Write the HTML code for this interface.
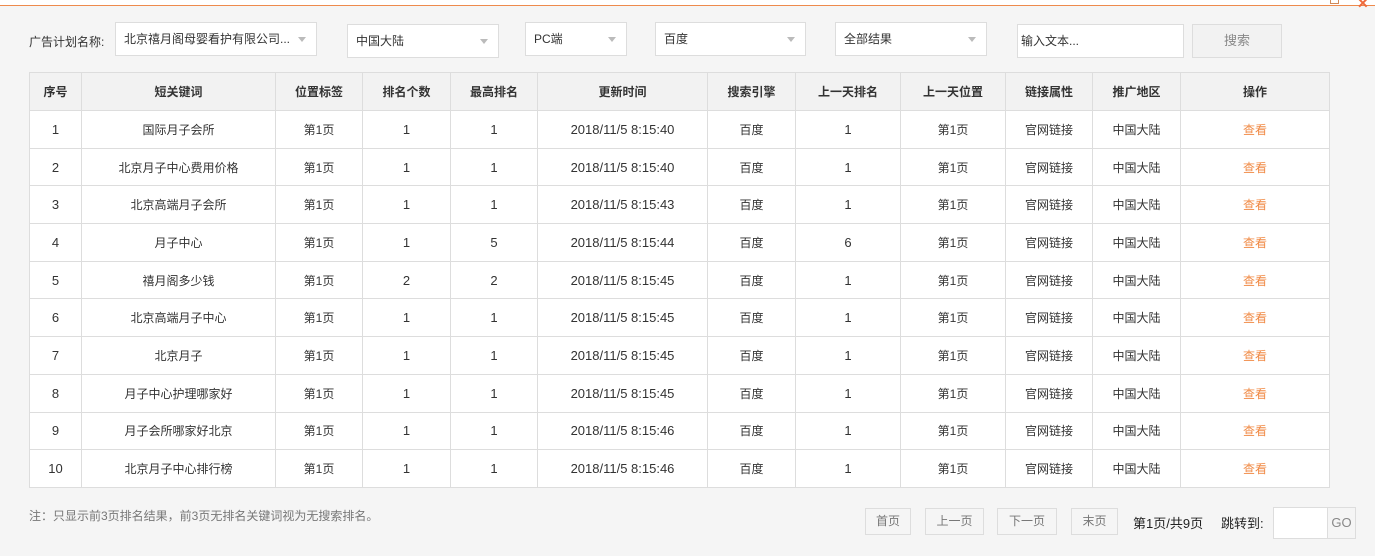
<!DOCTYPE html>
<html><head><meta charset="utf-8"><style>
*{margin:0;padding:0;box-sizing:border-box}
body{width:1385px;height:556px;background:#fff;font-family:"Liberation Sans","Noto Sans CJK SC",sans-serif;font-size:12px;color:#333;position:relative;overflow:hidden}
#bg{position:absolute;left:0;top:5px;width:1375px;height:551px;background:#f5f5f5;border-top:1px solid #ee8a4c}
.a{position:absolute}
.sel{position:absolute;background:#fff;border:1px solid #ddd;height:34px;line-height:32px;padding-left:8px;color:#333}
.sel:after{content:"";position:absolute;right:10px;top:14px;border-left:4px solid transparent;border-right:4px solid transparent;border-top:5px solid #bbb}
table{position:absolute;left:29px;top:72px;border-collapse:collapse;background:#fff;table-layout:fixed}
td,th{border:1px solid #ddd;text-align:center;font-size:12px;height:37.7px;padding:0;color:#333}
td:nth-child(6){font-size:13px}
td:nth-child(1),td:nth-child(4),td:nth-child(5),td:nth-child(8){font-size:13px}
th{background:#f2f2f2;font-weight:bold;height:38px}
.o{color:#f08a45}
.pb{position:absolute;border:1px solid #ddd;background:#f5f5f5;color:#777;height:27px;line-height:25px;text-align:center;top:508px}
</style></head><body>
<div id="bg"></div>
<div class="a" style="left:1330px;top:0;width:9px;height:4px;border:1px solid #d08a5a;border-top:none"></div>
<div class="a" style="left:1357px;top:-5px;color:#ee6a3c;font-size:14px;font-weight:bold">✕</div>
<div class="a" style="left:29px;top:34px;line-height:16px">广告计划名称:</div>
<div class="sel" style="left:115px;top:22px;width:202px">北京禧月阁母婴看护有限公司...</div>
<div class="sel" style="left:347px;top:24px;width:152px">中国大陆</div>
<div class="sel" style="left:525px;top:22px;width:102px">PC端</div>
<div class="sel" style="left:655px;top:22px;width:151px">百度</div>
<div class="sel" style="left:835px;top:22px;width:152px">全部结果</div>
<div class="a" style="left:1017px;top:24px;width:167px;height:34px;background:#fff;border:1px solid #ddd;line-height:32px;padding-left:3px">输入文本...</div>
<div class="a" style="left:1192px;top:24px;width:90px;height:34px;background:#f2f2f2;border:1px solid #ddd;line-height:32px;text-align:center;color:#888;font-size:13px">搜索</div>
<table>
<colgroup><col style="width:52px"><col style="width:194px"><col style="width:87px"><col style="width:88px"><col style="width:87px"><col style="width:170px"><col style="width:88px"><col style="width:105px"><col style="width:105px"><col style="width:87px"><col style="width:88px"><col style="width:149px"></colgroup>
<tr><th>序号</th><th>短关键词</th><th>位置标签</th><th>排名个数</th><th>最高排名</th><th>更新时间</th><th>搜索引擎</th><th>上一天排名</th><th>上一天位置</th><th>链接属性</th><th>推广地区</th><th>操作</th></tr>
<tr><td>1</td><td>国际月子会所</td><td>第1页</td><td>1</td><td>1</td><td>2018/11/5 8:15:40</td><td>百度</td><td>1</td><td>第1页</td><td>官网链接</td><td>中国大陆</td><td class="o">查看</td></tr>
<tr><td>2</td><td>北京月子中心费用价格</td><td>第1页</td><td>1</td><td>1</td><td>2018/11/5 8:15:40</td><td>百度</td><td>1</td><td>第1页</td><td>官网链接</td><td>中国大陆</td><td class="o">查看</td></tr>
<tr><td>3</td><td>北京高端月子会所</td><td>第1页</td><td>1</td><td>1</td><td>2018/11/5 8:15:43</td><td>百度</td><td>1</td><td>第1页</td><td>官网链接</td><td>中国大陆</td><td class="o">查看</td></tr>
<tr><td>4</td><td>月子中心</td><td>第1页</td><td>1</td><td>5</td><td>2018/11/5 8:15:44</td><td>百度</td><td>6</td><td>第1页</td><td>官网链接</td><td>中国大陆</td><td class="o">查看</td></tr>
<tr><td>5</td><td>禧月阁多少钱</td><td>第1页</td><td>2</td><td>2</td><td>2018/11/5 8:15:45</td><td>百度</td><td>1</td><td>第1页</td><td>官网链接</td><td>中国大陆</td><td class="o">查看</td></tr>
<tr><td>6</td><td>北京高端月子中心</td><td>第1页</td><td>1</td><td>1</td><td>2018/11/5 8:15:45</td><td>百度</td><td>1</td><td>第1页</td><td>官网链接</td><td>中国大陆</td><td class="o">查看</td></tr>
<tr><td>7</td><td>北京月子</td><td>第1页</td><td>1</td><td>1</td><td>2018/11/5 8:15:45</td><td>百度</td><td>1</td><td>第1页</td><td>官网链接</td><td>中国大陆</td><td class="o">查看</td></tr>
<tr><td>8</td><td>月子中心护理哪家好</td><td>第1页</td><td>1</td><td>1</td><td>2018/11/5 8:15:45</td><td>百度</td><td>1</td><td>第1页</td><td>官网链接</td><td>中国大陆</td><td class="o">查看</td></tr>
<tr><td>9</td><td>月子会所哪家好北京</td><td>第1页</td><td>1</td><td>1</td><td>2018/11/5 8:15:46</td><td>百度</td><td>1</td><td>第1页</td><td>官网链接</td><td>中国大陆</td><td class="o">查看</td></tr>
<tr><td>10</td><td>北京月子中心排行榜</td><td>第1页</td><td>1</td><td>1</td><td>2018/11/5 8:15:46</td><td>百度</td><td>1</td><td>第1页</td><td>官网链接</td><td>中国大陆</td><td class="o">查看</td></tr>
</table>
<div class="a" style="left:29px;top:508px;color:#777;line-height:16px">注：只显示前3页排名结果，前3页无排名关键词视为无搜索排名。</div>
<div class="pb" style="left:865px;width:46px">首页</div>
<div class="pb" style="left:925px;width:59px">上一页</div>
<div class="pb" style="left:997px;width:60px">下一页</div>
<div class="pb" style="left:1071px;width:47px">末页</div>
<div class="a" style="left:1133px;top:513px;font-size:13px;color:#222">第1页/共9页</div>
<div class="a" style="left:1221px;top:513px;font-size:13px;color:#222">跳转到:</div>
<div class="a" style="left:1273px;top:507px;width:55px;height:32px;background:#fff;border:1px solid #ddd"></div>
<div class="a" style="left:1327px;top:507px;width:29px;height:32px;border:1px solid #ddd;background:#f5f5f5;line-height:30px;text-align:center;color:#888;font-size:13px">GO</div>
</body></html>
